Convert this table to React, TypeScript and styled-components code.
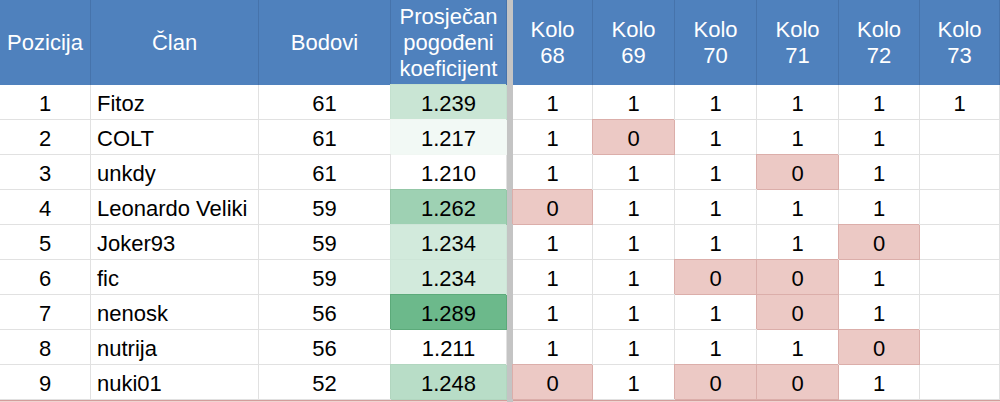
import React from "react";
import styled, { createGlobalStyle } from "styled-components";

const Global = createGlobalStyle`
  html, body { margin: 0; padding: 0; background: #ffffff; }
  body { font-family: "Liberation Sans", Arial, sans-serif; overflow: hidden; }
`;

const Table = styled.div`
  display: grid;
  grid-template-columns: 91px 168px 132px 116px 6px 80px 82px 82px 82px 81px 80px;
  grid-template-rows: 85px repeat(9, 35px) 2px;
  width: 1000px;
  height: 402px;
  font-size: 22px;
  color: #000;
`;

const Divider = styled.div`
  grid-column: 5;
  grid-row: 1 / -1;
  background: #c4c4c4;
`;

const HeadCell = styled.div`
  display: flex;
  align-items: center;
  justify-content: center;
  text-align: center;
  background: #4f81bd;
  color: #ffffff;
  line-height: 26px;
  border-right: 1px solid #4673ab;
  box-sizing: border-box;
  padding-top: 1px;
`;

const Cell = styled.div<{ $align?: "left" | "center"; $bg?: string; $edge?: string }>`
  display: flex;
  align-items: center;
  justify-content: ${(p) => (p.$align === "left" ? "flex-start" : "center")};
  padding: 3px ${(p) => (p.$align === "left" ? "6px" : "0")} 0;
  box-sizing: border-box;
  background: ${(p) => p.$bg ?? "#ffffff"};
  border-right: 1px solid ${(p) => p.$edge ?? "#e1e1e1"};
  border-bottom: 1px solid ${(p) => p.$edge ?? "#e1e1e1"};
  box-shadow: ${(p) => (p.$edge ? `-1px -1px 0 0 ${p.$edge}` : "none")};
  white-space: nowrap;
`;

const EndLine = styled.div`
  background: #efd3d1;
  border-top: 1px solid #d39d9b;
  box-sizing: border-box;
`;

type Row = { pos: number; name: string; pts: number; coef: string; rounds: string[] };

const rows: Row[] = [
  { pos: 1, name: "Fitoz", pts: 61, coef: "1.239", rounds: ["1", "1", "1", "1", "1", "1"] },
  { pos: 2, name: "COLT", pts: 61, coef: "1.217", rounds: ["1", "0", "1", "1", "1", ""] },
  { pos: 3, name: "unkdy", pts: 61, coef: "1.210", rounds: ["1", "1", "1", "0", "1", ""] },
  { pos: 4, name: "Leonardo Veliki", pts: 59, coef: "1.262", rounds: ["0", "1", "1", "1", "1", ""] },
  { pos: 5, name: "Joker93", pts: 59, coef: "1.234", rounds: ["1", "1", "1", "1", "0", ""] },
  { pos: 6, name: "fic", pts: 59, coef: "1.234", rounds: ["1", "1", "0", "0", "1", ""] },
  { pos: 7, name: "nenosk", pts: 56, coef: "1.289", rounds: ["1", "1", "1", "0", "1", ""] },
  { pos: 8, name: "nutrija", pts: 56, coef: "1.211", rounds: ["1", "1", "1", "1", "0", ""] },
  { pos: 9, name: "nuki01", pts: 52, coef: "1.248", rounds: ["0", "1", "0", "0", "1", ""] },
];

const MIN = 1.21;
const MAX = 1.289;
const TOP = [108, 185, 139];
const TOP_EDGE = [92, 170, 122];

function mix(v: number, c: number[]): string {
  const t = Math.max(0, Math.min(1, (v - MIN) / (MAX - MIN)));
  const ch = c.map((x) => Math.round(255 - t * (255 - x)));
  return `rgb(${ch[0]}, ${ch[1]}, ${ch[2]})`;
}

function coefColors(coef: string) {
  const v = parseFloat(coef);
  const t = (v - MIN) / (MAX - MIN);
  if (t <= 0.02) return { bg: undefined, edge: undefined };
  return { bg: mix(v, TOP), edge: mix(v, TOP_EDGE) };
}

const kola = ["68", "69", "70", "71", "72", "73"];

export default function App() {
  return (
    <>
      <Global />
      <Table>
        <Divider />
        <HeadCell>Pozicija</HeadCell>
        <HeadCell>Član</HeadCell>
        <HeadCell>Bodovi</HeadCell>
        <HeadCell>
          Prosječan
          <br />
          pogođeni
          <br />
          koeficijent
        </HeadCell>
        {kola.map((k) => (
          <HeadCell key={k}>
            Kolo
            <br />
            {k}
          </HeadCell>
        ))}
        {rows.map((r) => {
          const c = coefColors(r.coef);
          return (
            <React.Fragment key={r.pos}>
              <Cell>{r.pos}</Cell>
              <Cell $align="left">{r.name}</Cell>
              <Cell>{r.pts}</Cell>
              <Cell $bg={c.bg} $edge={c.edge}>
                {r.coef}
              </Cell>
              {r.rounds.map((v, i) =>
                v === "0" ? (
                  <Cell key={i} $bg="#ecc9c5" $edge="#dbaeaa">
                    {v}
                  </Cell>
                ) : (
                  <Cell key={i}>{v}</Cell>
                )
              )}
            </React.Fragment>
          );
        })}
        {Array.from({ length: 10 }).map((_, i) => (
          <EndLine key={i} />
        ))}
      </Table>
    </>
  );
}
